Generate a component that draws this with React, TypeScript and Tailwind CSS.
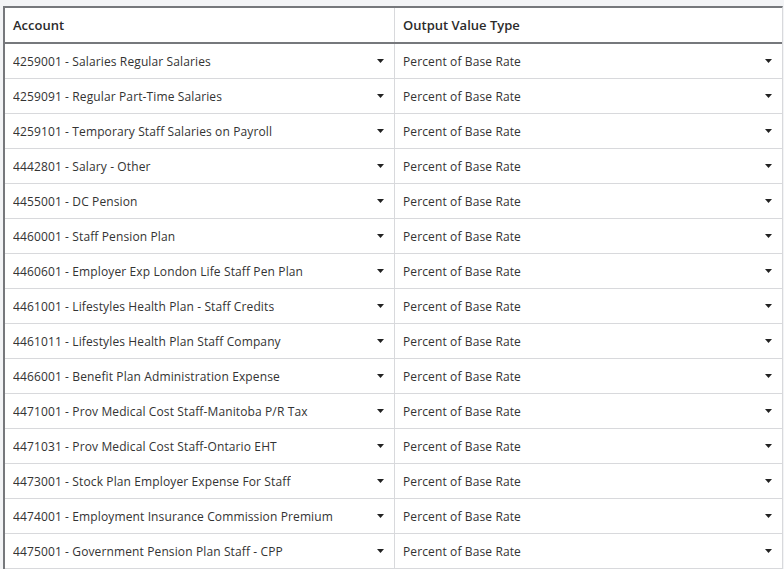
const accounts = [
  '4259001 - Salaries Regular Salaries',
  '4259091 - Regular Part-Time Salaries',
  '4259101 - Temporary Staff Salaries on Payroll',
  '4442801 - Salary - Other',
  '4455001 - DC Pension',
  '4460001 - Staff Pension Plan',
  '4460601 - Employer Exp London Life Staff Pen Plan',
  '4461001 - Lifestyles Health Plan - Staff Credits',
  '4461011 - Lifestyles Health Plan Staff Company',
  '4466001 - Benefit Plan Administration Expense',
  '4471001 - Prov Medical Cost Staff-Manitoba P/R Tax',
  '4471031 - Prov Medical Cost Staff-Ontario EHT',
  '4473001 - Stock Plan Employer Expense For Staff',
  '4474001 - Employment Insurance Commission Premium',
  '4475001 - Government Pension Plan Staff - CPP',
]

function Caret() {
  return (
    <svg width="7" height="4" viewBox="0 0 7 4" className="shrink-0">
      <path d="M0 0h7L3.5 4z" fill="#222" />
    </svg>
  )
}

function Cell({ value, last }: { value: string; last?: boolean }) {
  return (
    <div className={`flex items-center justify-between pl-[8px] pr-[10px] h-[34px] ${last ? '' : 'border-r border-[#d8d9dc]'}`}>
      <span className="truncate pt-[2px] tracking-[0.12px]">{value}</span>
      <Caret />
    </div>
  )
}

export default function App() {
  return (
    <div
      className="w-[784px] h-[569px] overflow-hidden bg-[#f3f4f6] pt-[6px] pl-[3px] text-[#333]"
      style={{ fontFamily: '"Segoe UI", "Open Sans", sans-serif' }}
    >
      <div className="bg-white border-t-2 border-l-2 border-[#76787c] border-r border-r-[#d8d9dc] w-[780px]">
        <div className="grid grid-cols-[390px_1fr] border-b-2 border-[#76787c] text-[13px] font-semibold text-[#2b2b2b]">
          <div className="h-[34px] flex items-center pl-[8px] pt-[2px] border-r border-[#d8d9dc]">Account</div>
          <div className="h-[34px] flex items-center pl-[8px] pt-[2px]">Output Value Type</div>
        </div>
        {accounts.map((a) => (
          <div key={a} className="grid grid-cols-[390px_1fr] border-b border-[#d8d9dc] text-[12px]">
            <Cell value={a} />
            <Cell value="Percent of Base Rate" last />
          </div>
        ))}
      </div>
    </div>
  )
}
